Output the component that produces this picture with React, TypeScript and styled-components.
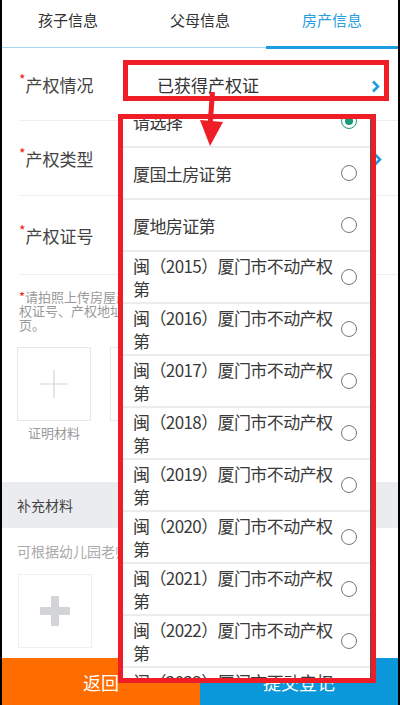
import React from 'react'
import styled, { createGlobalStyle } from 'styled-components'

const GlobalStyle = createGlobalStyle`
  html, body {
    margin: 0;
    padding: 0;
    background: #000;
  }
  body {
    font-family: "Noto Sans CJK SC", "Noto Sans", sans-serif;
  }
`

const Page = styled.div`
  position: relative;
  margin: 0 2px;
  height: 705px;
  background: #fff;
  display: flex;
  flex-direction: column;
  overflow: hidden;
`

const Tabs = styled.div`
  display: flex;
  height: 48px;
  border-bottom: 1.5px solid #a6d8f3;
  box-sizing: border-box;
`

const Tab = styled.div<{ $active?: boolean }>`
  flex: 1;
  display: flex;
  justify-content: center;
  padding-top: 8px;
  font-size: 15px;
  line-height: 24px;
  color: ${p => (p.$active ? '#2a9fe0' : '#333')};
  border-bottom: ${p => (p.$active ? '3px solid #1e9ce0' : 'none')};
  margin-bottom: ${p => (p.$active ? '-1.5px' : '0')};
`

const FormRow = styled.div<{ $height: number }>`
  height: ${p => p.$height}px;
  margin-left: 17px;
  padding-right: 18px;
  display: flex;
  align-items: center;
  border-bottom: 1px solid #eeeeee;
  box-sizing: border-box;
`

const Label = styled.div`
  width: 118px;
  font-size: 17px;
  color: #444;
  display: flex;
  align-items: flex-start;
`

const Star = styled.span`
  color: #f01818;
  font-size: 14px;
  line-height: 14px;
`

const Value = styled.div`
  flex: 1;
  padding-left: 20px;
  font-size: 17px;
  color: #333;
`

const Hint = styled.div`
  padding: 15px 17px 0 17px;
  font-size: 13px;
  line-height: 13.5px;
  color: #9a9a9a;
`

const UploadRow = styled.div`
  display: flex;
  gap: 19px;
  margin: 16px 0 0 15px;
`

const UploadItem = styled.div`
  display: flex;
  flex-direction: column;
  align-items: center;
`

const UploadBox = styled.div`
  width: 74px;
  height: 74px;
  border: 1px solid #e8e8e8;
  box-sizing: border-box;
  display: flex;
  align-items: center;
  justify-content: center;
`

const Caption = styled.div`
  margin-top: 4px;
  font-size: 13px;
  line-height: 16px;
  color: #999;
`

const SectionHead = styled.div`
  margin-top: 41px;
  height: 46px;
  background: #ebecef;
  display: flex;
  align-items: center;
  padding-left: 15px;
  font-size: 14px;
  color: #444;
`

const Note = styled.div`
  padding: 16px 15px 0;
  font-size: 14px;
  line-height: 14px;
  color: #aaa;
`

const NoteBox = styled(UploadBox)`
  margin: 16px 0 0 16px;
  border-color: #efefef;
`

const Footer = styled.div`
  margin-top: auto;
  height: 47px;
  display: flex;
`

const FooterButton = styled.div<{ $bg: string }>`
  flex: 1;
  background: ${p => p.$bg};
  color: #fff;
  font-size: 18px;
  display: flex;
  align-items: center;
  justify-content: center;
`

const Chevron = styled.svg<{ $x: number; $y: number }>`
  position: absolute;
  left: ${p => p.$x}px;
  top: ${p => p.$y}px;
`

const MarkBox = styled.div`
  position: absolute;
  left: 121px;
  top: 60px;
  width: 266px;
  height: 41px;
  border: 5px solid #ee1d26;
  box-sizing: border-box;
`

const Arrow = styled.svg`
  position: absolute;
  left: 194px;
  top: 92px;
`

const Dropdown = styled.div`
  position: absolute;
  left: 116px;
  top: 114px;
  width: 258px;
  height: 569px;
  border: 5px solid #ee1d26;
  box-sizing: border-box;
  background: #fff;
  overflow: hidden;
`

const OptionList = styled.div`
  margin-top: -23px;
  border-right: 1.5px solid #555;
  min-height: 600px;
`

const Option = styled.div`
  height: 52px;
  border-bottom: 2px solid #ececec;
  box-sizing: border-box;
  display: flex;
  align-items: center;
  padding: 0 13px 0 10px;
`

const OptionText = styled.div`
  width: 206px;
  font-size: 17px;
  line-height: 23px;
  letter-spacing: -0.6px;
  color: #3a3a3a;
`

const Radio = styled.div<{ $checked?: boolean }>`
  margin-left: auto;
  flex: none;
  width: 16px;
  height: 16px;
  border-radius: 50%;
  box-sizing: border-box;
  border: 1.6px solid ${p => (p.$checked ? '#1a9a7b' : '#777')};
  display: flex;
  align-items: center;
  justify-content: center;
  &::after {
    content: '';
    display: ${p => (p.$checked ? 'block' : 'none')};
    width: 8px;
    height: 8px;
    border-radius: 50%;
    background: #1a9a7b;
  }
`

const options = [
  '请选择',
  '厦国土房证第',
  '厦地房证第',
  ...[2015, 2016, 2017, 2018, 2019, 2020, 2021, 2022, 2023].map(
    y => `闽（${y}）厦门市不动产权第`
  ),
]

function ChevronIcon({ x, y }: { x: number; y: number }) {
  return (
    <Chevron $x={x} $y={y} width="9" height="13" viewBox="0 0 9 13">
      <path d="M2 1.5 L7 6.5 L2 11.5" fill="none" stroke="#1e9ce0" strokeWidth="2.6" />
    </Chevron>
  )
}

export default function App() {
  return (
    <>
      <GlobalStyle />
      <Page>
        <Tabs>
          <Tab>孩子信息</Tab>
          <Tab>父母信息</Tab>
          <Tab $active>房产信息</Tab>
        </Tabs>

        <FormRow $height={73}>
          <Label>
            <Star>*</Star>产权情况
          </Label>
          <Value>已获得产权证</Value>
        </FormRow>
        <FormRow $height={75}>
          <Label>
            <Star>*</Star>产权类型
          </Label>
          <Value />
        </FormRow>
        <FormRow $height={79}>
          <Label>
            <Star>*</Star>产权证号
          </Label>
          <Value />
        </FormRow>

        <Hint>
          <Star style={{ fontSize: 13 }}>*</Star>请拍照上传房屋产权证书首页及附记页，需包含产
          <br />
          权证号、产权地址及产权人信息等内容的完整内
          <br />
          页。
        </Hint>

        <UploadRow>
          <UploadItem>
            <UploadBox>
              <svg width="30" height="30" viewBox="0 0 30 30">
                <path d="M15 1 V29 M1 15 H29" stroke="#d6d6d6" strokeWidth="1.2" />
              </svg>
            </UploadBox>
            <Caption>证明材料</Caption>
          </UploadItem>
          <UploadItem>
            <UploadBox />
            <Caption>证明材料</Caption>
          </UploadItem>
        </UploadRow>

        <SectionHead>补充材料</SectionHead>
        <Note>可根据幼儿园老师要求补充上传其他材料</Note>
        <NoteBox>
          <svg width="30" height="30" viewBox="0 0 30 30">
            <path d="M15 2 V28 M2 15 H28" stroke="#d3d4d8" strokeWidth="8" strokeLinecap="round" />
          </svg>
        </NoteBox>

        <Footer>
          <FooterButton $bg="#ff6d00">返回</FooterButton>
          <FooterButton $bg="#0b98da">提交登记</FooterButton>
        </Footer>

        <ChevronIcon x={369} y={80} />
        <ChevronIcon x={371} y={153} />

        <MarkBox />

        <Dropdown>
          <OptionList>
            {options.map((o, i) => (
              <Option key={o}>
                <OptionText>{o}</OptionText>
                <Radio $checked={i === 0} />
              </Option>
            ))}
          </OptionList>
        </Dropdown>

        <Arrow width="30" height="56" viewBox="0 0 30 56">
          <path d="M16.5 0 L14 34" stroke="#ee1d26" strokeWidth="5" />
          <polygon points="4,28 27,30 14,54" fill="#ee1d26" />
        </Arrow>
      </Page>
    </>
  )
}
